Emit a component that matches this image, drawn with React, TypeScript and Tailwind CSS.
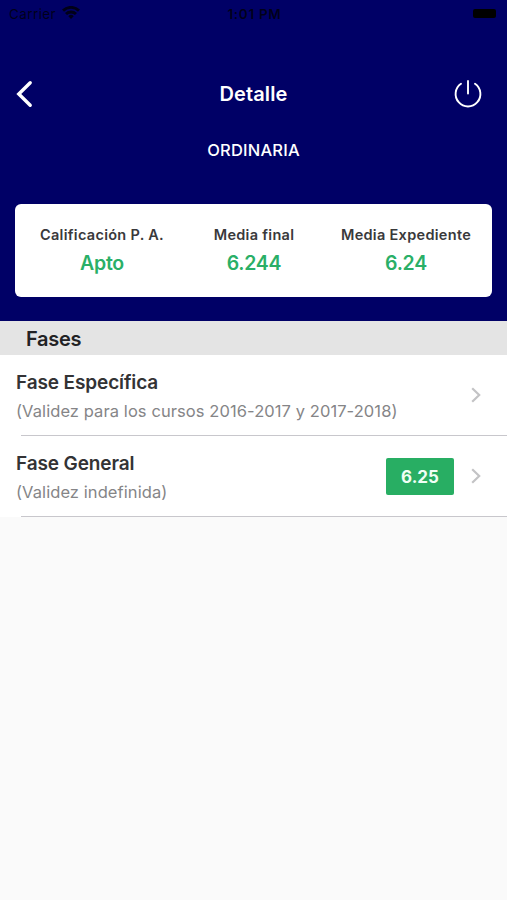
const summary = [
  { label: 'Calificación P. A.', value: 'Apto' },
  { label: 'Media final', value: '6.244' },
  { label: 'Media Expediente', value: '6.24' },
]

const phases = [
  { name: 'Fase Específica', note: '(Validez para los cursos 2016-2017 y 2017-2018)', grade: null },
  { name: 'Fase General', note: '(Validez indefinida)', grade: '6.25' },
]

function StatusBar() {
  return (
    <div className="grid h-[28px] grid-cols-3 items-center pr-[11px] pl-[9px] text-[13.5px] text-black/75">
      <div className="flex items-center gap-[6px]">
        <span className="tracking-[0.4px]">Carrier</span>
        <svg className="-mt-[3px]" width="18" height="13" viewBox="0 0 18 13" fill="none" stroke="#000018" strokeWidth="2.9">
          <path d="M1 4.6a11.5 11.5 0 0 1 16 0" />
          <path d="M4 8a7.2 7.2 0 0 1 10 0" />
          <path d="M9 13 6.3 10.2a3.8 3.8 0 0 1 5.4 0Z" fill="#000018" stroke="none" />
        </svg>
      </div>
      <span className="pl-[4px] text-center font-semibold tracking-[0.7px] whitespace-nowrap">1:01 PM</span>
      <div className="mb-[2px] h-[9px] w-[23px] justify-self-end rounded-[2px] bg-black" />
    </div>
  )
}

function Chevron() {
  return (
    <svg className="shrink-0" width="10" height="16" viewBox="0 0 10 16" fill="none" stroke="#c3c3c5" strokeWidth="2.2">
      <path d="M1.2 1.2 8.2 8l-7 6.8" />
    </svg>
  )
}

export default function App() {
  return (
    <div className="flex h-[900px] w-[507px] flex-col overflow-hidden bg-[#fafafa] font-['Inter','Liberation_Sans',sans-serif]">
      <header className="flex h-[321px] shrink-0 flex-col bg-[#000066] text-white">
        <StatusBar />
        <div className="mt-[42px] flex h-[48px] items-center justify-between pr-[25px] pl-[16px]">
          <button className="flex w-[37px]" aria-label="Atrás">
            <svg width="17" height="28" viewBox="0 0 17 28" fill="none" stroke="#fff" strokeWidth="3.4" strokeLinecap="round">
              <path d="M14.2 2.8 2.8 14l11.4 11.2" />
            </svg>
          </button>
          <h1 className="text-[20px] leading-none font-semibold tracking-[0.1px]">Detalle</h1>
          <button aria-label="Salir">
            <svg width="28" height="28" viewBox="0 0 28 28" fill="none" stroke="#fff" strokeWidth="1.9" strokeLinecap="round">
              <path d="M14 1v12.5" />
              <path d="M7 3.8a12.4 12.4 0 1 0 14 0" />
            </svg>
          </button>
        </div>
        <h2 className="mt-[20px] text-center text-[16.5px] leading-[24px] font-medium tracking-[0.2px]">ORDINARIA</h2>
        <div className="mx-[15px] mt-[42px] grid h-[93px] grid-cols-3 rounded-[6px] bg-white pr-[10px] pl-[11px] pt-[20px] text-center whitespace-nowrap">
          {summary.map((item) => (
            <div key={item.label}>
              <p className="text-[14.5px] leading-[22px] font-semibold tracking-[0.3px] text-[#39393b]">{item.label}</p>
              <p className="mt-[4px] text-[19.5px] leading-[26px] font-semibold tracking-[-0.25px] text-[#2aaf67]">{item.value}</p>
            </div>
          ))}
        </div>
      </header>
      <h3 className="h-[34px] shrink-0 bg-[#e4e4e4] pl-[26px] text-[20px] leading-[36px] font-semibold tracking-[-0.3px] text-[#222224]">Fases</h3>
      <ul className="bg-white">
        {phases.map((phase) => (
          <li key={phase.name} className="h-[81px]">
            <div className="flex h-[80px] items-center pr-[26px] pl-[16px] whitespace-nowrap">
              <div className="flex-1 pt-[3px]">
                <p className="text-[19px] leading-[24px] font-semibold tracking-[-0.12px] text-[#333335]">{phase.name}</p>
                <p className="mt-[5px] text-[16.5px] leading-[22px] tracking-[0.08px] text-[#858587]">{phase.note}</p>
              </div>
              {phase.grade && (
                <span className="mt-px mr-[17px] h-[37px] w-[68px] rounded-[2px] bg-[#28ae63] text-center text-[17px] leading-[38px] font-bold text-[#f0fff6]">
                  {phase.grade}
                </span>
              )}
              <Chevron />
            </div>
            <div className="ml-[21px] h-px bg-[#c8c7cc]" />
          </li>
        ))}
      </ul>
    </div>
  )
}
